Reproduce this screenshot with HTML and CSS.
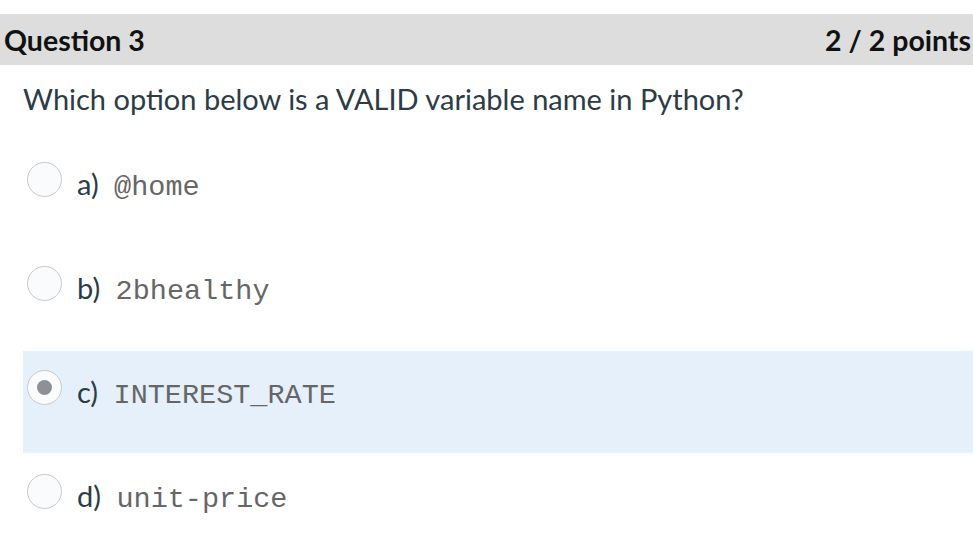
FILE: index.html
```html
<!DOCTYPE html>
<html>
<head>
<meta charset="utf-8">
<link rel="stylesheet" href="styles.css">
</head>
<body>
<div class="question">
  <div class="q-header">
    <span class="q-title">Question 3</span>
    <span class="q-points">2 / 2 points</span>
  </div>
  <div class="q-text">Which option below is a VALID variable name in Python?</div>
  <div class="answers">
    <div class="answer">
      <span class="radio"></span>
      <span class="label">a) <code>@home</code></span>
    </div>
    <div class="answer">
      <span class="radio"></span>
      <span class="label">b) <code>2bhealthy</code></span>
    </div>
    <div class="answer selected">
      <span class="radio checked"></span>
      <span class="label">c) <code>INTEREST_RATE</code></span>
    </div>
    <div class="answer">
      <span class="radio"></span>
      <span class="label">d) <code>unit-price</code></span>
    </div>
  </div>
</div>
</body>
</html>
```

FILE: styles.css
```css
html, body {
  margin: 0;
  padding: 0;
  background: #ffffff;
}
body {
  font-family: Lato, "Open Sans", sans-serif;
  color: #2d3b45;
  width: 973px;
  height: 553px;
  overflow: hidden;
}
.question {
  padding-top: 14px;
}
.q-header {
  display: flex;
  justify-content: space-between;
  align-items: center;
  height: 51px;
  background: #dddddd;
  padding: 0 2px 0 4px;
  font-weight: 700;
  font-size: 28.5px;
  color: #111111;
}
.q-text {
  margin: 18px 0 0 23px;
  font-size: 29px;
  line-height: 32px;
  color: #2d3b45;
}
.answers {
  margin: 28px 0 0 23px;
}
.answer {
  display: flex;
  align-items: flex-start;
  height: 102px;
  margin-bottom: 2px;
  padding: 19px 0 0 4px;
  box-sizing: border-box;
}
.answer.selected {
  background: #e5f0fb;
}
.radio {
  width: 35px;
  height: 35px;
  border: 1px solid #c7c9cc;
  border-radius: 50%;
  background: #fafbfd;
  box-sizing: border-box;
  display: flex;
  align-items: center;
  justify-content: center;
  flex: none;
}
.radio.checked::after {
  content: "";
  width: 15px;
  height: 15px;
  border-radius: 50%;
  background: #8d9196;
}
.label {
  margin-left: 15px;
  padding-top: 7px;
  font-size: 29px;
  line-height: 30px;
  color: #2d3b45;
}
.label code {
  font-family: "Courier New", Courier, "Nimbus Mono PS", "FreeMono", "Liberation Mono", monospace;
  font-size: 28.5px;
  font-weight: 400;
  color: #666666;
  margin-left: 8px;
}
```
